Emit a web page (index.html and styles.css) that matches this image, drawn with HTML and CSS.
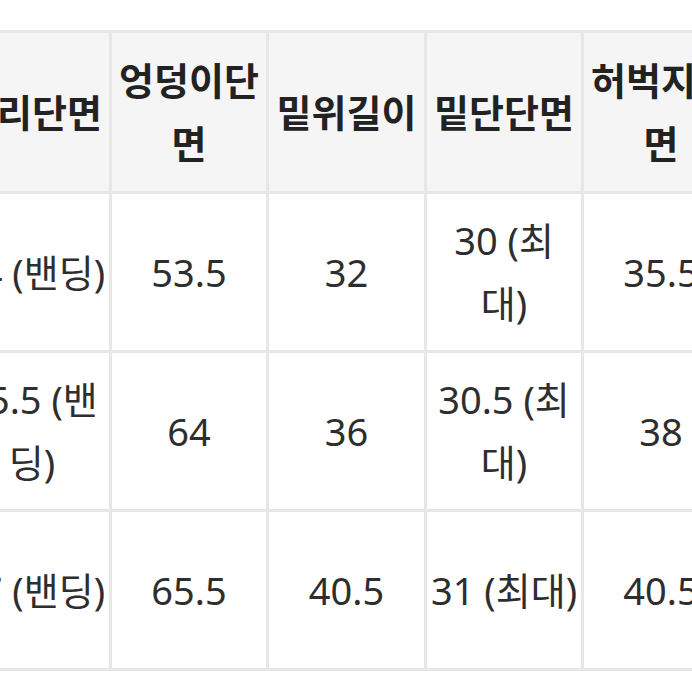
FILE: index.html
```html
<!DOCTYPE html>
<html lang="ko">
<head>
<meta charset="utf-8">
<title>사이즈표</title>
<link rel="stylesheet" href="styles.css">
</head>
<body>
<div class="size-table">
  <div class="cell head">허리단면</div>
  <div class="cell head">엉덩이단<br>면</div>
  <div class="cell head">밑위길이</div>
  <div class="cell head">밑단단면</div>
  <div class="cell head">허벅지단<br>면</div>
  <div class="cell head">총길이</div>

  <div class="cell">34 (밴딩)</div>
  <div class="cell">53.5</div>
  <div class="cell">32</div>
  <div class="cell">30 (최<br>대)</div>
  <div class="cell">35.5</div>
  <div class="cell">96</div>

  <div class="cell">35.5 (밴<br>딩)</div>
  <div class="cell">64</div>
  <div class="cell">36</div>
  <div class="cell">30.5 (최<br>대)</div>
  <div class="cell">38</div>
  <div class="cell">98</div>

  <div class="cell">37 (밴딩)</div>
  <div class="cell">65.5</div>
  <div class="cell">40.5</div>
  <div class="cell">31 (최대)</div>
  <div class="cell">40.5</div>
  <div class="cell">100</div>
</div>
</body>
</html>
```
FILE: styles.css
```css
html, body {
  margin: 0;
  padding: 0;
  background: #ffffff;
  overflow: hidden;
}

body {
  font-family: "Noto Sans", "Noto Sans CJK KR", sans-serif;
  color: #2e2e2e;
}

.size-table {
  display: grid;
  grid-template-columns: 154px 154px 155px 154px 154px 154px;
  grid-template-rows: 158px 156px 156px 156px;
  gap: 3px;
  padding: 3px;
  background: #e7e7e7;
  width: max-content;
  margin: 30px 0 0 -48px;
}

.cell {
  display: flex;
  align-items: center;
  justify-content: center;
  text-align: center;
  background: #ffffff;
  font-size: 38px;
  line-height: 63px;
  white-space: nowrap;
}

.head {
  background: #f5f5f5;
  font-weight: 700;
  color: #222222;
}
```
